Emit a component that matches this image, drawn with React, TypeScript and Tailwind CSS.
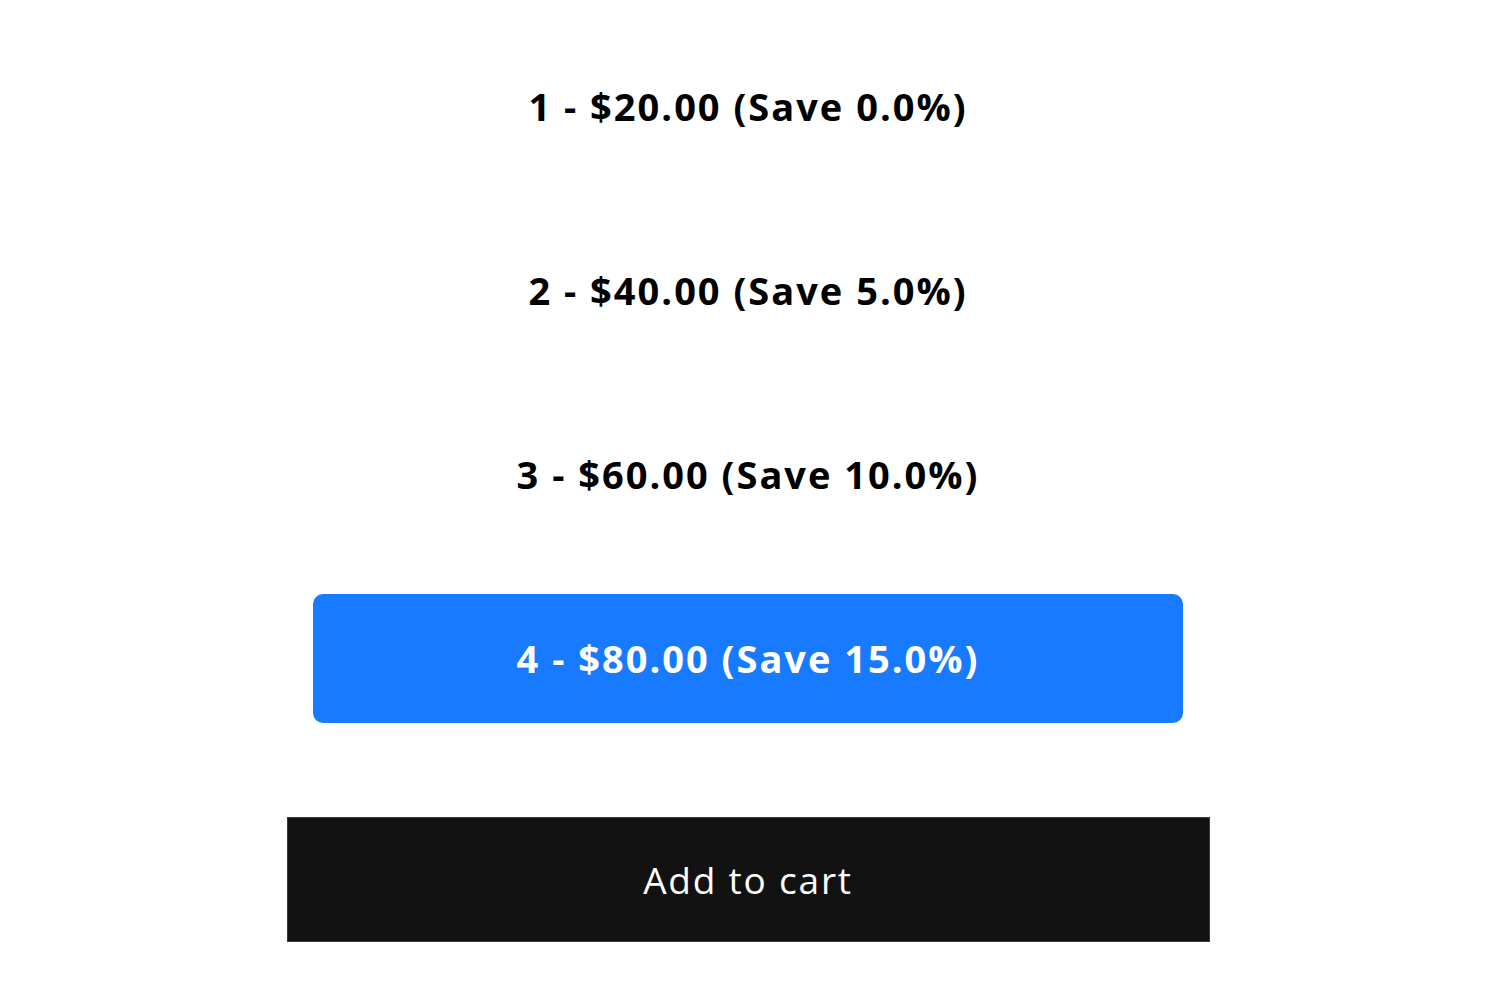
import React, { useState } from 'react';

const options = [
  { qty: 1, price: '$20.00', save: '0.0%' },
  { qty: 2, price: '$40.00', save: '5.0%' },
  { qty: 3, price: '$60.00', save: '10.0%' },
  { qty: 4, price: '$80.00', save: '15.0%' },
];

export default function App() {
  const [selected, setSelected] = useState(4);

  return (
    <div className="min-h-screen bg-white pt-[42px] pr-[4px] flex flex-col items-center" style={{ fontFamily: '"Open Sans", "Noto Sans", sans-serif' }}>
      <div className="w-[870px] flex flex-col gap-[55px]">
        {options.map((o) => {
          const active = o.qty === selected;
          return (
            <button
              key={o.qty}
              onClick={() => setSelected(o.qty)}
              className={
                active
                  ? 'h-[129px] rounded-[10px] bg-[#177aff] text-white flex items-center justify-center text-[38px] font-bold tracking-[2px]'
                  : 'h-[129px] rounded-[10px] bg-white text-black flex items-center justify-center text-[38px] font-bold tracking-[2px]'
              }
            >
              {o.qty} - {o.price} (Save {o.save})
            </button>
          );
        })}
      </div>

      <button className="mt-[94px] w-[923px] h-[125px] bg-[#121212] border border-[#3a3a3a] text-white text-[37px] tracking-[1.8px] flex items-center justify-center">
        Add to cart
      </button>
    </div>
  );
}
